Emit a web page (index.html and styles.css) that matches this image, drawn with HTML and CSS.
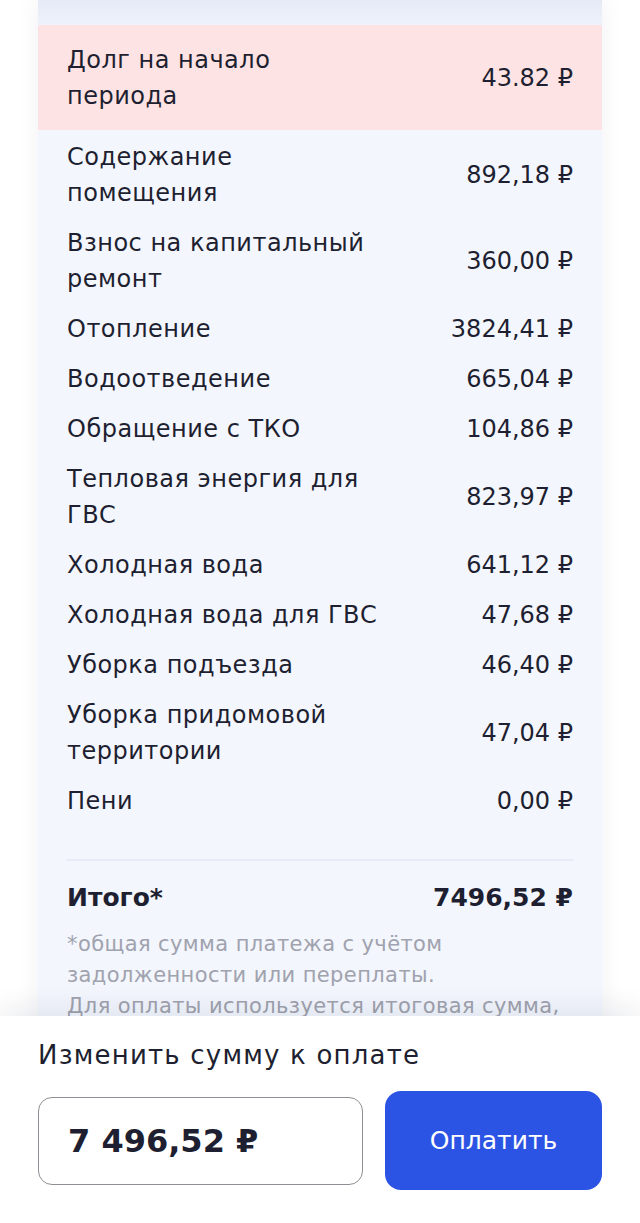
FILE: index.html
```html
<!DOCTYPE html>
<html lang="ru">
<head>
<meta charset="utf-8">
<title>Начисления</title>
<link rel="stylesheet" href="styles.css">
</head>
<body>
<div class="page">
  <div class="card">
    <div class="card-top"></div>
    <div class="row debt">
      <div class="label">Долг на начало<br>периода</div>
      <div class="amount">43.82 ₽</div>
    </div>
    <div class="rows">
      <div class="row"><div class="label">Содержание<br>помещения</div><div class="amount">892,18 ₽</div></div>
      <div class="row"><div class="label">Взнос на капитальный<br>ремонт</div><div class="amount">360,00 ₽</div></div>
      <div class="row"><div class="label">Отопление</div><div class="amount">3824,41 ₽</div></div>
      <div class="row"><div class="label">Водоотведение</div><div class="amount">665,04 ₽</div></div>
      <div class="row"><div class="label">Обращение с ТКО</div><div class="amount">104,86 ₽</div></div>
      <div class="row"><div class="label">Тепловая энергия для<br>ГВС</div><div class="amount">823,97 ₽</div></div>
      <div class="row"><div class="label">Холодная вода</div><div class="amount">641,12 ₽</div></div>
      <div class="row"><div class="label">Холодная вода для ГВС</div><div class="amount">47,68 ₽</div></div>
      <div class="row"><div class="label">Уборка подъезда</div><div class="amount">46,40 ₽</div></div>
      <div class="row"><div class="label">Уборка придомовой<br>территории</div><div class="amount">47,04 ₽</div></div>
      <div class="row"><div class="label">Пени</div><div class="amount">0,00 ₽</div></div>
      <div class="divider"></div>
      <div class="row total"><div class="label">Итого*</div><div class="amount">7496,52 ₽</div></div>
      <p class="note">*общая сумма платежа с учётом<br>задолженности или переплаты.<br>Для оплаты используется итоговая сумма,</p>
    </div>
  </div>
</div>
<div class="sheet">
  <div class="sheet-title">Изменить сумму к оплате</div>
  <div class="pay">
    <div class="sum-input">7 496,52 ₽</div>
    <button class="pay-btn" type="button">Оплатить</button>
  </div>
</div>
</body>
</html>
```
FILE: styles.css
```css
* { box-sizing: border-box; }
html, body {
  margin: 0;
  padding: 0;
  width: 640px;
  height: 1223px;
  overflow: hidden;
  background: #ffffff;
  font-family: "DejaVu Sans", "Open Sans", sans-serif;
  color: #1e1f30;
}
.page {
  height: 1016px;
  overflow: hidden;
  padding: 0 38px;
}
.card {
  background: #f3f6fd;
  box-shadow: 0 0 24px rgba(30, 40, 80, 0.06);
  min-height: 1100px;
}
.card-top {
  height: 25px;
  background: linear-gradient(#e6eaf6, #eef2fc);
}
.row {
  display: flex;
  justify-content: space-between;
  align-items: center;
  padding: 7px 0;
  font-size: 24px;
  letter-spacing: 0.5px;
  line-height: 36px;
}
.debt {
  background: #fde3e3;
  padding: 17px 29px 16px;
}
.rows {
  padding: 2px 29px 0;
}
.label {
  white-space: nowrap;
}
.amount {
  white-space: nowrap;
  text-align: right;
  letter-spacing: 0;
}
.divider {
  height: 2px;
  background: #e7ebf5;
  margin: 33px 0 12px;
}
.total {
  font-weight: 700;
  font-size: 25px;
  letter-spacing: 0;
}
.note {
  margin: 6px 0 0;
  font-size: 21px;
  letter-spacing: 0.4px;
  line-height: 31px;
  color: #a0a2ae;
  white-space: nowrap;
}
.sheet {
  position: relative;
  height: 207px;
  background: #ffffff;
  box-shadow: 0 -10px 24px rgba(20, 30, 60, 0.07);
  padding: 24px 38px 0;
}
.sheet-title {
  font-size: 26px;
  letter-spacing: 1.2px;
  line-height: 30px;
  font-weight: 500;
  color: #1e1f30;
}
.pay {
  display: flex;
  align-items: center;
  gap: 22px;
  margin-top: 21px;
}
.sum-input {
  width: 325px;
  height: 88px;
  border: 1.5px solid #8e8f94;
  border-radius: 14px;
  padding-left: 29px;
  display: flex;
  align-items: center;
  font-size: 32px;
  font-weight: 700;
  color: #1e1f30;
}
.pay-btn {
  flex: 1;
  height: 99px;
  border: 0;
  border-radius: 16px;
  background: #2c54e4;
  color: #ffffff;
  font-family: inherit;
  font-size: 25px;
  font-weight: 400;
}
```
